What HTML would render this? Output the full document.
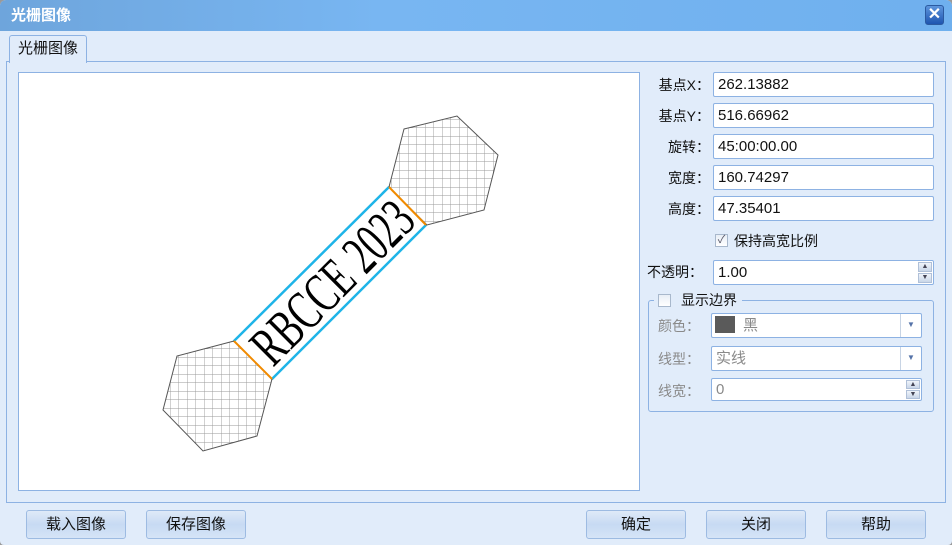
<!DOCTYPE html>
<html><head><meta charset="utf-8"><style>
*{margin:0;padding:0;box-sizing:border-box}
body{width:952px;height:545px;background:#9a9a9a;font-family:"Liberation Sans","Noto Sans CJK SC",sans-serif;font-size:14px;color:#111;overflow:hidden;position:relative}
.win{position:absolute;left:0;top:0;width:952px;height:545px;background:#e1ecfa;border-radius:6px 6px 4px 4px;overflow:hidden}
.title{position:absolute;left:0;top:0;width:952px;height:31px;background:linear-gradient(90deg,#6ea5dc,#78b6f2 40%,#6fb0ee);color:#fff;font-weight:bold;font-size:15px;line-height:31px;padding-left:11px}
.close{position:absolute;left:925px;top:5px;width:19px;height:20px;background:linear-gradient(#5d95dc,#1e55b0);border-radius:3px;border:1px solid #2b5aa0;color:#fff;font-size:16px;line-height:17px;text-align:center;font-weight:bold}
.tab{position:absolute;left:9px;top:35px;width:78px;height:28px;border:1px solid #8db2e3;border-bottom:none;background:#e1ecfa;border-radius:3px 3px 0 0;font-size:15px;line-height:26px;padding-left:8px;z-index:2}
.panel{position:absolute;left:6px;top:61px;width:940px;height:442px;border:1px solid #8db2e3}
.img{position:absolute;left:18px;top:72px;width:622px;height:419px;background:#fff;border:1px solid #8db2e3}
.lbl{position:absolute;width:70px;text-align:right;font-size:14px}
.inp{position:absolute;left:713px;width:221px;height:25px;background:#fff;border:1px solid #8db2e3;border-radius:2px;font-size:15px;line-height:23px;padding-left:4px}
.dis{color:#8a8a8a}
.spin{position:absolute;right:1px;top:1px;width:14px;height:21px;}
.spin div{height:10px;margin-bottom:1px;background:linear-gradient(#f0f4fa,#c9d6e8);border:1px solid #b0c0d8;font-size:7px;line-height:8px;text-align:center;color:#445}
.dd{position:absolute;right:0;top:0;width:21px;height:100%;border-left:1px solid #c8d4e4;color:#5573a8;font-size:8px;text-align:center;line-height:22px}
.btn{position:absolute;top:510px;width:100px;height:29px;border:1px solid #9dbbe2;border-radius:3px;background:linear-gradient(#dfeaf8,#c7daf3 50%,#d5e4f7);font-size:15px;text-align:center;line-height:27px}
.cb{position:absolute;width:13px;height:13px;border:1px solid #a8b8cc;background:linear-gradient(#e8eef6,#fff);font-size:11px;line-height:11px;text-align:center;color:#556}
</style></head><body><div class="win">
<div class="title">光栅图像</div>
<div class="close">✕</div>
<div class="tab">光栅图像</div>
<div class="panel"></div>
<div class="img">
<svg width="620" height="417" viewBox="19 73 620 417" style="position:absolute;left:0;top:0">
<defs><pattern id="h" width="8.5" height="8.5" patternUnits="userSpaceOnUse"><path d="M0 0H8.5M0 0V8.5" stroke="#999" stroke-width="0.9" fill="none"/></pattern></defs>
<polygon points="404,129 457,116 498,155 484,210 427,225 389,187" fill="url(#h)" stroke="#555" stroke-width="1"/>
<polygon points="234,341 177,356 163,410 203,451 257,436 272,379" fill="url(#h)" stroke="#555" stroke-width="1"/>
<polygon points="389,187 426,225 272,379 234,341" fill="#fff" stroke="#111" stroke-width="1"/>
<line x1="389" y1="187" x2="234" y2="341" stroke="#1eb4e8" stroke-width="2.5"/>
<line x1="426" y1="225" x2="272" y2="379" stroke="#1eb4e8" stroke-width="2.5"/>
<line x1="389" y1="187" x2="426" y2="225" stroke="#f08a00" stroke-width="2"/>
<line x1="234" y1="341" x2="272" y2="379" stroke="#f08a00" stroke-width="2"/>
<text x="0" y="19" transform="translate(332,282) rotate(-45)" text-anchor="middle" font-family="Liberation Serif,serif" font-size="56" textLength="205" lengthAdjust="spacingAndGlyphs" fill="#000">RBCCE  2023</text>
</svg></div>
<div class="lbl" style="left:640px;top:75px">基点X：</div><div class="inp" style="top:72px">262.13882</div>
<div class="lbl" style="left:640px;top:106px">基点Y：</div><div class="inp" style="top:103px">516.66962</div>
<div class="lbl" style="left:640px;top:137px">旋转：</div><div class="inp" style="top:134px">45:00:00.00</div>
<div class="lbl" style="left:640px;top:168px">宽度：</div><div class="inp" style="top:165px">160.74297</div>
<div class="lbl" style="left:640px;top:199px">高度：</div><div class="inp" style="top:196px">47.35401</div>
<div class="cb" style="left:715px;top:234px">✓</div><div style="position:absolute;left:734px;top:231px;font-size:14px">保持高宽比例</div>
<div class="lbl" style="top:262px;text-align:left;left:647px">不透明：</div><div class="inp" style="top:260px">1.00<div class="spin"><div>▲</div><div>▼</div></div></div>
<div style="position:absolute;left:648px;top:300px;width:286px;height:112px;border:1px solid #8db2e3;border-radius:3px"></div>
<div style="position:absolute;left:654px;top:290px;width:88px;height:20px;background:#e1ecfa"></div>
<div class="cb" style="left:658px;top:294px"></div><div style="position:absolute;left:681px;top:290px;font-size:14px">显示边界</div>
<div class="lbl dis" style="left:658px;top:316px;text-align:left">颜色：</div>
<div class="inp dis" style="left:711px;top:313px;width:211px;height:25px"><span style="display:inline-block;width:20px;height:17px;background:#5a5a5a;vertical-align:-3px;margin-right:8px;margin-left:-1px"></span>黑<div class="dd">▼</div></div>
<div class="lbl dis" style="left:658px;top:349px;text-align:left">线型：</div>
<div class="inp dis" style="left:711px;top:346px;width:211px;height:25px">实线<div class="dd">▼</div></div>
<div class="lbl dis" style="left:658px;top:381px;text-align:left">线宽：</div>
<div class="inp dis" style="left:711px;top:378px;width:211px;height:23px;line-height:21px">0<div class="spin" style="height:19px"><div style="height:9px">▲</div><div style="height:9px">▼</div></div></div>
<div class="btn" style="left:26px">载入图像</div>
<div class="btn" style="left:146px">保存图像</div>
<div class="btn" style="left:586px">确定</div>
<div class="btn" style="left:706px">关闭</div>
<div class="btn" style="left:826px">帮助</div>
</div></body></html>
